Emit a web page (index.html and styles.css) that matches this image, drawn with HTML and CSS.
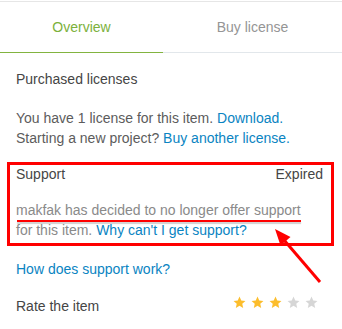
FILE: index.html
```html
<!DOCTYPE html>
<html>
<head>
<meta charset="utf-8">
<link rel="stylesheet" href="styles.css">
</head>
<body>
<div class="page">
  <nav class="tabs">
    <a class="tab active">Overview</a>
    <a class="tab">Buy license</a>
  </nav>
  <div class="content">
    <section class="licenses">
      <h3 class="title">Purchased licenses</h3>
      <p class="text">You have 1 license for this item. <a class="link">Download.</a><br>Starting a new project? <a class="link">Buy another license.</a></p>
    </section>
    <section class="support">
      <div class="row">
        <h3 class="title">Support</h3>
        <span class="status">Expired</span>
      </div>
      <p class="text muted"><span class="marked">makfak has decided to no longer offer support</span><br>for this item. <a class="link">Why can't I get support?</a></p>
    </section>
    <p class="help"><a class="link">How does support work?</a></p>
    <div class="rate">
      <h3 class="title">Rate the item</h3>
      <div class="stars">
        <svg class="star on" viewBox="0 0 24 24"><polygon points="12,1 15.2,8.2 23,9 17.1,14.3 18.8,22 12,18 5.2,22 6.9,14.3 1,9 8.8,8.2"/></svg>
        <svg class="star on" viewBox="0 0 24 24"><polygon points="12,1 15.2,8.2 23,9 17.1,14.3 18.8,22 12,18 5.2,22 6.9,14.3 1,9 8.8,8.2"/></svg>
        <svg class="star on" viewBox="0 0 24 24"><polygon points="12,1 15.2,8.2 23,9 17.1,14.3 18.8,22 12,18 5.2,22 6.9,14.3 1,9 8.8,8.2"/></svg>
        <svg class="star" viewBox="0 0 24 24"><polygon points="12,1 15.2,8.2 23,9 17.1,14.3 18.8,22 12,18 5.2,22 6.9,14.3 1,9 8.8,8.2"/></svg>
        <svg class="star" viewBox="0 0 24 24"><polygon points="12,1 15.2,8.2 23,9 17.1,14.3 18.8,22 12,18 5.2,22 6.9,14.3 1,9 8.8,8.2"/></svg>
      </div>
    </div>
  </div>
  <div class="mark-box"></div>
  <svg class="mark-arrow" viewBox="0 0 70 70" width="70" height="70">
    <line x1="58" y1="62" x2="22" y2="20" stroke="#f00" stroke-width="3"/>
    <polygon points="13,9 28.5,17 18.5,25.5" fill="#f00"/>
  </svg>
</div>
</body>
</html>
```
FILE: styles.css
```css
* { box-sizing: border-box; }
html, body { margin: 0; background: #fff; }
body {
  font-family: "Liberation Sans", Arial, sans-serif;
  font-size: 14px;
  line-height: 20px;
  color: #5c5c5c;
}
.page {
  position: relative;
  width: 342px;
  height: 329px;
  overflow: hidden;
  padding-top: 1px;
}
.tabs {
  display: grid;
  grid-template-columns: 163px 1fr;
  border-top: 1px solid #e6e6e6;
}
.tab {
  display: block;
  height: 51px;
  line-height: 50px;
  text-align: center;
  color: #959595;
  border-bottom: 1px solid #e2e7eb;
}
.tab.active {
  color: #7cb13c;
  border-bottom-color: #82b440;
}
.content {
  padding: 16px 19px 0 16px;
}
.title {
  margin: 0;
  font-size: 14px;
  font-weight: normal;
  line-height: 20px;
  color: #454545;
}
.text { margin: 0; }
.licenses .text { margin-top: 19px; }
.link { color: #0a84c2; }
.support { margin-top: 16px; }
.row {
  display: flex;
  justify-content: space-between;
}
.status { color: #454545; }
.support .text { margin-top: 16px; }
.muted { color: #8a8a8a; }
.marked { position: relative; }
.marked::after {
  content: "";
  position: absolute;
  left: 1px;
  right: 0;
  top: calc(100% + 2px);
  height: 1.5px;
  background: #f00;
  box-shadow: 0 2px 1px rgba(120, 120, 120, 0.35);
}
.help { margin: 19px 0 0; }
.rate {
  margin-top: 17px;
  display: flex;
  justify-content: space-between;
}
.stars {
  display: flex;
  gap: 5px;
  padding: 0 5px 0 0;
}
.star {
  width: 13px;
  height: 13px;
  fill: #d6d6d6;
}
.star.on { fill: #fcbd2c; }
.mark-box {
  position: absolute;
  left: 7px;
  top: 162px;
  width: 327px;
  height: 84px;
  border: 3px solid #f00;
}
.mark-arrow {
  position: absolute;
  left: 262px;
  top: 220px;
}
```
